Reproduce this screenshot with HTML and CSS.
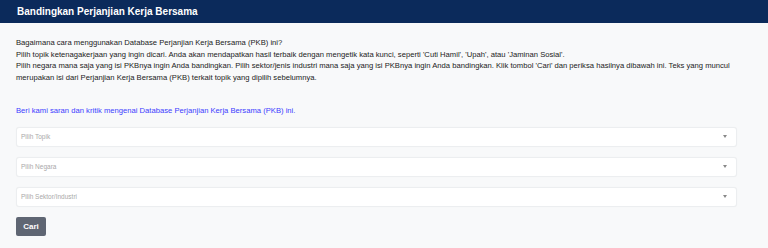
FILE: index.html
```html
<!DOCTYPE html>
<html lang="id">
<head>
  <meta charset="UTF-8" />
  <meta name="viewport" content="width=device-width, initial-scale=1.0"/>
  <title>Bandingkan Perjanjian Kerja Bersama</title>
  <link rel="stylesheet" href="styles.css">
</head>
<body>
  <div class="header">
    <h1>Bandingkan Perjanjian Kerja Bersama</h1>
  </div>

  <div class="content">
    <p class="intro">
      Bagaimana cara menggunakan Database Perjanjian Kerja Bersama (PKB) ini?<br>
      Pilih topik ketenagakerjaan yang ingin dicari. Anda akan mendapatkan hasil terbaik dengan mengetik kata kunci, seperti 'Cuti Hamil', 'Upah', atau 'Jaminan Sosial'.<br>
      Pilih negara mana saja yang isi PKBnya ingin Anda bandingkan. Pilih sektor/jenis industri mana saja yang isi PKBnya ingin Anda bandingkan. Klik tombol 'Cari' dan periksa hasilnya dibawah ini. Teks yang muncul merupakan isi dari Perjanjian Kerja Bersama (PKB) terkait topik yang dipilih sebelumnya.
    </p>

    <a class="feedback" href="#">Beri kami saran dan kritik mengenai Database Perjanjian Kerja Bersama (PKB) ini.</a>

    <form class="search">
      <div class="select">
        <span class="placeholder">Pilih Topik</span>
        <span class="caret"></span>
      </div>
      <div class="select">
        <span class="placeholder">Pilih Negara</span>
        <span class="caret"></span>
      </div>
      <div class="select">
        <span class="placeholder">Pilih Sektor/Industri</span>
        <span class="caret"></span>
      </div>
      <button type="submit">Cari</button>
    </form>
  </div>
</body>
</html>
```

FILE: styles.css
```css
body {
  margin: 0;
  font-family: "Liberation Sans", Arial, sans-serif;
  background: #f8f9fa;
  color: #222;
}

.header {
  background: #0b2a5b;
  height: 23px;
  display: flex;
  align-items: center;
  padding-left: 17px;
}

.header h1 {
  margin: 0;
  color: white;
  font-size: 10px;
  font-weight: bold;
}

.content {
  padding: 14px 31px 0 16px;
}

.intro {
  margin: 0;
  font-size: 7.65px;
  line-height: 11.5px;
}

.feedback {
  display: block;
  margin-top: 22px;
  font-size: 7.65px;
  line-height: 11.5px;
  color: #3d3dff;
  text-decoration: none;
}

.search {
  margin-top: 10px;
  display: flex;
  flex-direction: column;
  gap: 10px;
}

.select {
  height: 20px;
  box-sizing: border-box;
  background: white;
  border: 1px solid #eceef0;
  border-radius: 3px;
  box-shadow: 0 0 1px rgba(0, 0, 0, 0.05);
  display: flex;
  align-items: center;
  justify-content: space-between;
  padding: 0 9px 0 4px;
}

.placeholder {
  font-size: 6.5px;
  color: #a9a9a9;
}

.caret {
  width: 0;
  height: 0;
  border-left: 2.5px solid transparent;
  border-right: 2.5px solid transparent;
  border-top: 3px solid #888;
}

button {
  align-self: flex-start;
  width: 30px;
  height: 19px;
  padding: 0;
  background: #5f6673;
  color: white;
  font-family: inherit;
  font-size: 8px;
  font-weight: bold;
  border: none;
  border-radius: 2px;
  cursor: pointer;
}
```
